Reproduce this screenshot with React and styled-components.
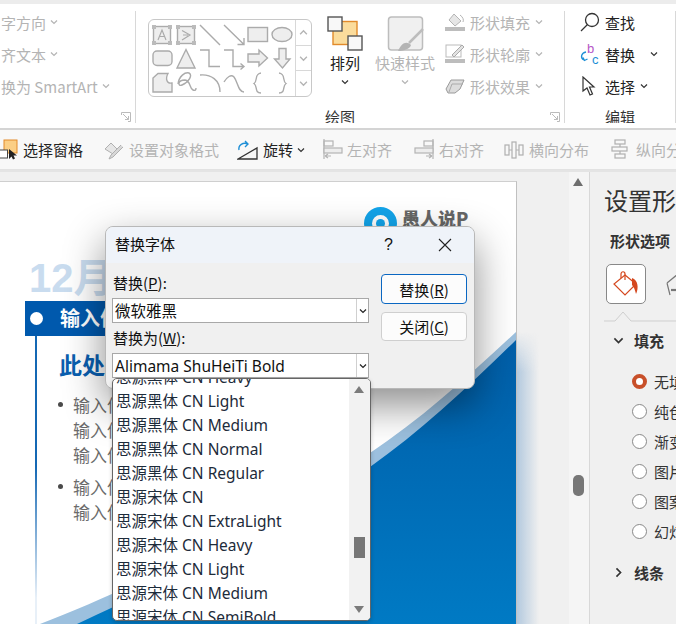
import React from "react";
import styled, { createGlobalStyle } from "styled-components";

const FONT = `"Noto Sans CJK SC", "Noto Sans", sans-serif`;
const Global = createGlobalStyle`
  html, body { margin: 0; padding: 0; background: #f0f0f0; }
  body { width: 676px; height: 624px; overflow: hidden; font-family: ${FONT}; }
`;

const Page = styled.div`
  position: relative; width: 676px; height: 624px; overflow: hidden;
  display: flex; flex-direction: column; background: #f0f0f0;
`;
const TopStrip = styled.div`height: 4px; background: #ececec; flex: none;`;
const Ribbon = styled.div`
  height: 124px; flex: none; background: #fff; display: flex; border-bottom: 2px solid #d4d4d4; box-sizing: content-box; overflow: hidden;
`;
const RibbonGroup = styled.div`
  position: relative; flex: none; width: ${p => p.$w}px; height: 112px; box-sizing: border-box; overflow: hidden;
  border-right: 1px solid #d8d8d8; margin-top: 7px;
`;
const MutedRow = styled.div`
  height: 32px; display: flex; align-items: center; white-space: nowrap; font-size: 15px; color: #b4b4b4; gap: ${p => p.$gap || 4}px;
`;
const RowStack = styled.div`display: flex; flex-direction: column; margin: -5px 0 0 1px;`;
const Launcher = styled.svg`position: absolute; right: 4px; bottom: 1px; width: 10px; height: 10px;`;
const GalleryBox = styled.div`
  position: absolute; left: 12px; top: 8px; width: 164px; height: 78px; border: 1px solid #c8c8c8; border-radius: 6px; display: flex; overflow: hidden; box-sizing: border-box;
`;
const GalleryShapes = styled.svg`width: 146px; height: 76px; flex: none;`;
const GalleryBtns = styled.div`flex: 1; display: flex; flex-direction: column; border-left: 1px solid #d8d8d8;`;
const GalleryBtn = styled.div`flex: 1; border-bottom: 1px solid #d8d8d8; display: flex; align-items: center; justify-content: center; &:last-child { border-bottom: none; }`;
const GroupLabel = styled.div`position: absolute; bottom: -2px; left: ${p => p.$l}px; font-size: 15px; line-height: 16px; height: 16px; color: #333;`;
const BigBtn = styled.div`
  position: absolute; left: ${p => p.$l}px; top: 5px; width: ${p => p.$w}px; display: flex; flex-direction: column; align-items: center; font-size: 15px; color: ${p => p.$muted ? "#b4b4b4" : "#222"};
`;
const BigLabel = styled.div`line-height: 18px; margin: 3px 0 6px; white-space: nowrap;`;
const RowCol = styled.div`position: absolute; left: ${p => p.$l}px; top: -5px; display: flex; flex-direction: column;`;
const DarkRow = styled(MutedRow)`color: #222;`;
const Spacer = styled.span`width: ${p => p.$w}px; flex: none;`;

const Toolbar = styled.div`
  height: 39px; flex: none; background: #f8f8f8; border-bottom: 1px solid #e2e2e2; display: flex; align-items: center; font-size: 15px; white-space: nowrap; overflow: hidden;
`;
const ToolItem = styled.div`
  flex: none; display: flex; align-items: center; gap: ${p => p.$gap || 4}px; color: ${p => p.$muted ? "#b4b4b4" : "#222"}; margin-left: ${p => p.$ml || 0}px;
`;

const Work = styled.div`flex: 1; display: flex; min-height: 0; background: #f0f0f0; border-top: 2px solid #e4e4e4;`;
const Stage = styled.div`position: relative; flex: none; width: 569px; padding-top: 9px; box-sizing: border-box; overflow: hidden;`;
const Slide = styled.div`
  position: relative; width: 517px; height: 100%; background: #fff; box-sizing: border-box; border-top: 1px solid #cfcfcf; border-right: 1px solid #c0c0c0; overflow: hidden;
`;
const SlideGlow = styled.div`
  position: absolute; left: 517px; top: 160px; bottom: 0; width: 22px;
  background: linear-gradient(to right, #b3c9de, rgba(240,240,240,0));
  -webkit-mask-image: linear-gradient(to bottom, transparent, #000 40px);
  mask-image: linear-gradient(to bottom, transparent, #000 40px);
`;
const Wave = styled.svg`position: absolute; left: 0; bottom: 0; width: 516px; height: 300px;`;
const Logo = styled.div`position: absolute; left: 364px; top: 25px; display: flex; align-items: flex-start; gap: 5px;`;
const LogoMark = styled.div`width: 33px; height: 33px; border-radius: 50%; border: 8px solid #12a4ea; background: #fff; box-sizing: border-box; display: flex; align-items: center; justify-content: center; flex: none; &::after { content: ""; width: 9px; height: 9px; border-radius: 50%; background: #12a4ea; }`;
const LogoText = styled.span`font-weight: 900; color: #666; font-size: 18px; line-height: 24px; white-space: nowrap; margin-top: -1px;`;
const SlideBody = styled.div`position: relative; padding-top: 62px; display: flex; flex-direction: column;`;
const Year = styled.div`font-family: "Liberation Sans", "Noto Sans CJK SC", sans-serif; font-weight: 700; font-size: 40px; line-height: 45px; color: #c9dcef; margin-left: 29px; margin-top: 12px;`;
const Banner = styled.div`height: 35px; background: #0059ad; margin: 0 0 0 25px; display: flex; align-items: center; color: #fff; font-weight: 700; font-size: 20px; gap: 17px; padding: 0 0 3px 5px; width: 140px; box-sizing: border-box;`;
const Dot = styled.span`width: 13px; height: 13px; border-radius: 50%; background: #fff; flex: none; margin-top: 3px;`;
const Content = styled.div`margin-left: 35px; border-left: 2px solid; border-image: linear-gradient(#1468b4, #1468b4 45%, #e8f0f8 90%) 1; padding-left: 22px; height: 290px;`;
const Heading = styled.div`font-size: 23px; font-weight: 700; color: #0a5fb0; line-height: 30px; margin-top: 13px; white-space: nowrap;`;
const Bullets = styled.ul`list-style: none; margin: 13px 0 0; padding: 0 0 0 14px;`;
const Bullet = styled.li`position: relative; font-size: 17px; line-height: 25px; color: #6b6b6b; margin-bottom: 7px; white-space: pre-line; &::before { content: ""; position: absolute; left: -15px; top: 10px; width: 5px; height: 5px; border-radius: 50%; background: #4a4a4a; }`;

const VScroll = styled.div`
  position: relative; flex: none; width: 20px; background: #f5f5f5; border-right: 1px solid #d8d8d8;
`;
const Arrow = styled.div`
  position: absolute; left: 4px; top: 6px; width: 0; height: 0; border-left: 5.5px solid transparent; border-right: 5.5px solid transparent; border-bottom: 8px solid #6e6e6e;
`;
const Thumb = styled.div`position: absolute; left: 4px; top: 303px; width: 11px; height: 21px; border-radius: 5px; background: #777;`;
const Panel = styled.div`flex: 1; padding: 10px 0 0 14px; color: #333; overflow: hidden; white-space: nowrap;`;
const PanelTitle = styled.div`font-size: 24px; line-height: 35px; color: #333;`;
const PanelTab = styled.div`font-size: 15px; font-weight: 700; line-height: 20px; margin: 14px 0 0 6px;`;
const IconRow = styled.div`display: flex; gap: 19px; margin: 13px 0 0 2px; align-items: center;`;
const FillIcon = styled.div`width: 40px; height: 40px; border: 1px solid #888; border-radius: 5px; background: #fff; display: flex; align-items: center; justify-content: center; box-sizing: border-box; flex: none;`;
const Notch = styled.svg`display: block; width: 86px; height: 12px; margin-top: 6px;`;
const Section = styled.div`display: flex; align-items: center; gap: 10px; font-size: 15px; font-weight: 700; margin-left: 9px; height: 30px; margin-top: ${p => p.$mt || 0}px;`;
const RadioList = styled.div`display: flex; flex-direction: column; margin: 11px 0 0 28px;`;
const RadioRow = styled.div`height: 30px; display: flex; align-items: center; gap: 7px; font-size: 15px;`;
const Radio = styled.span`width: 15px; height: 15px; border-radius: 50%; box-sizing: border-box; background: #fff; flex: none; border: ${p => p.$on ? "4px solid #c8502a" : "1px solid #888"};`;

const Dialog = styled.div`
  position: absolute; left: 105px; top: 226px; width: 370px; height: 163px; border-radius: 8px; background: #f0f0f0; border: 1px solid #b8b8b8; box-sizing: border-box; box-shadow: 0 16px 40px rgba(0,0,0,.45); overflow: hidden; display: flex; flex-direction: column; font-size: 15px; color: #111;
`;
const DlgHead = styled.div`height: 36px; flex: none; background: #eff3f9; display: flex; align-items: center; padding-left: 9px;`;
const DlgTitle = styled.div`flex: 1; font-size: 15px; padding-bottom: 4px;`;
const HelpBtn = styled.div`width: 15px; font-family: "Liberation Sans", sans-serif; font-size: 16px; margin-right: 39px;`;
const CloseBtn = styled.svg`width: 14px; height: 14px; margin-right: 22px;`;
const DlgBody = styled.div`flex: 1; display: flex; padding: 10px 8px 0 6px;`;
const DlgFields = styled.div`width: 257px; flex: none; display: flex; flex-direction: column;`;
const FieldLabel = styled.div`height: 20px; line-height: 20px; margin-left: 1px; font-size: 15px;`;
const Under = styled.span`text-decoration: underline;`;
const Combo = styled.div`
  height: 25px; background: #fff; border: 1px solid #a8a8a8; box-sizing: border-box; display: flex; align-items: center; margin: 5px 0; font-size: 15.5px;
`;
const ComboText = styled.div`flex: 1; padding-left: 2px; font-family: "Noto Sans", "Noto Sans CJK SC", sans-serif;`;
const ComboArrow = styled.div`width: 11px; height: 100%; border-left: 1px solid #d0d0d0; display: flex; align-items: center; justify-content: center; flex: none;`;
const DlgBtns = styled.div`flex: 1; margin-left: 12px; display: flex; flex-direction: column; gap: 8px; margin-top: 1px;`;
const DlgBtn = styled.div`
  height: ${p => p.$primary ? 30 : 29}px; box-sizing: border-box; background: #fcfcfc; border-radius: 4px; display: flex; align-items: center; justify-content: center;
  border: 1px solid ${p => p.$primary ? "#0a67c2" : "#cfcfcf"}; font-size: 15px; width: 86px;
`;
const Dropdown = styled.div`
  position: absolute; left: 112px; top: 378px; width: 259px; height: 243px; background: #fff; border: 1px solid #666; border-radius: 5px; box-sizing: border-box; overflow: hidden; box-shadow: 0 2px 4px rgba(0,0,0,.2);
  display: flex;
`;
const DropList = styled.div`flex: 1; margin-top: -14px; overflow: hidden; padding-left: 3px; font-size: 15.5px; font-family: "Noto Sans", "Noto Sans CJK SC", sans-serif; color: #1d2b3a;`;
const DropItem = styled.div`height: 24px; line-height: 24px; white-space: nowrap;`;
const DropScroll = styled.div`position: relative; width: 21px; flex: none; background: #f2f2f2;`;
const DropArrowUp = styled.div`position: absolute; left: 5px; top: 7px; width: 0; height: 0; border-left: 5.5px solid transparent; border-right: 5.5px solid transparent; border-bottom: 7px solid #7b7b7b;`;
const DropArrowDown = styled.div`position: absolute; left: 5px; bottom: 7px; width: 0; height: 0; border-left: 5.5px solid transparent; border-right: 5.5px solid transparent; border-top: 7px solid #7b7b7b;`;
const DropThumb = styled.div`position: absolute; left: 5px; top: 158px; width: 11px; height: 21px; background: #777;`;

const Chev = ({ c = "#b4b4b4", s = 8, dir = "down" }) => (
  <svg width={s} height={s} viewBox="0 0 8 8" style={{ flex: "none", transform: dir === "right" ? "rotate(-90deg)" : dir === "up" ? "rotate(180deg)" : "none" }}>
    <path d="M1 2.5 L4 5.5 L7 2.5" fill="none" stroke={c} strokeWidth="1.2" />
  </svg>
);

const LauncherIcon = () => (
  <Launcher viewBox="0 0 10 10"><path d="M.5 3V.5H9.5V9.5H7M2 2L7.5 7.5M7.5 4V7.5H4" fill="none" stroke="#bbb" /></Launcher>
);

const GS = "#ababab";
const Gallery = () => (
  <GalleryShapes viewBox="0 0 146 76" fill="none" stroke={GS} strokeWidth="1.4">
    <g fill="#eee">
      <rect x="4.5" y="6.5" width="17" height="17" />
      <rect x="28.5" y="6.5" width="17" height="17" />
      <rect x="99" y="7.5" width="19.5" height="14" />
      <ellipse cx="133" cy="14.5" rx="10" ry="7" />
      <rect x="4" y="31" width="19" height="14.5" rx="4" />
      <path d="M28 48 L37 29.5 L46 48 Z" />
      <path d="M99 34 H110 V30 L118.5 38 L110 46 V42 H99 Z" />
      <path d="M130 28.5 H137 V39 H141 L133.5 48 L125.5 39 H130 Z" />
      <path d="M9 53.5 H19 C16 59 18 64 23 63 V72 H4 V58 Z" />
    </g>
    <g fill="#bbb" stroke="none">
      <rect x="3" y="5" width="4" height="4" /><rect x="19" y="5" width="4" height="4" /><rect x="3" y="21" width="4" height="4" /><rect x="19" y="21" width="4" height="4" />
      <rect x="27" y="5" width="4" height="4" /><rect x="43" y="5" width="4" height="4" /><rect x="27" y="21" width="4" height="4" /><rect x="43" y="21" width="4" height="4" />
    </g>
    <path d="M9 20 L13 10 L17 20 M10.5 16.5 H15.5" strokeWidth="1.2" />
    <path d="M33 10.5 L41 15 L33 20 M34 15 H39" strokeWidth="1.2" />
    <path d="M51 5 L71 25" />
    <path d="M75 5 L95 24.5 M95 18 V24.5 H88.5" />
    <path d="M51 30 H60 V46.5 H71" />
    <path d="M75 30 H84 V46.5 H94.5 M91.5 43.5 L95 46.5 L91.5 49.5" />
    <path d="M29 64 C30 56 36 52 40 53 C44 55 40 62 33 65 C29 67 28 60 36 60 C42 61 40 68 44 70 C46 71 47 70 47 68" />
    <path d="M51 55 C62 54 71 60 71 72" />
    <path d="M75 62 C78 57 82 54 85 57 C89 62 89 72 95 72" />
    <path d="M112 53 C105 54 109 61 105 63.5 C109 66 105 73 112 73" />
    <path d="M130 53 C137 54 133 61 137 63.5 C133 66 137 73 130 73" />
  </GalleryShapes>
);

const Arrange = () => (
  <svg width="37" height="35" viewBox="0 0 37 35">
    <rect x="6" y="5.5" width="24" height="23" fill="#fbdc9c" stroke="#e28a2b" strokeWidth="1.4" />
    <rect x="1" y="1" width="14" height="14" fill="#f8f8f8" stroke="#555" strokeWidth="1.4" />
    <rect x="21" y="20" width="14" height="14" fill="#f8f8f8" stroke="#555" strokeWidth="1.4" />
  </svg>
);
const QuickStyle = () => (
  <svg width="37" height="35" viewBox="0 0 37 35">
    <rect x="1.5" y="1" width="34" height="33" rx="3" fill="#f0f0f0" stroke="#bdbdbd" strokeWidth="1.5" />
    <path d="M36 13 L22 27" stroke="#bdbdbd" strokeWidth="2.5" />
    <path d="M11 35 C14 28 19 24 24 29 C23 33 16 35 11 35 Z" fill="#b4b4b4" />
  </svg>
);
const FillSmall = () => (
  <svg width="20" height="19" viewBox="0 0 20 19" style={{ flex: "none" }}>
    <path d="M9 1 L16 8 L10 13 L4 7 Z" fill="#e6e6e6" stroke="#b4b4b4" />
    <path d="M15 2 C18 4 19 7 18 9" stroke="#b4b4b4" fill="none" />
    <rect x="0" y="14" width="20" height="4" fill="#bdbdbd" />
  </svg>
);
const OutlineSmall = () => (
  <svg width="20" height="20" viewBox="0 0 20 20" style={{ flex: "none" }}>
    <rect x="1" y="1" width="15" height="12" fill="none" stroke="#bbb" />
    <path d="M7 11 L17 1 L19 3 L9 13 Z" fill="#e2e2e2" stroke="#aaa" />
    <rect x="0" y="15" width="20" height="4" fill="#bdbdbd" />
  </svg>
);
const EffectSmall = () => (
  <svg width="20" height="16" viewBox="0 0 20 16" style={{ flex: "none" }}>
    <path d="M1 11 L6 2 H19 L15 11 L10 15 H3 Z" fill="#dcdcdc" stroke="#9a9a9a" />
    <path d="M4 14 L7 6 H18" fill="none" stroke="#aaa" />
  </svg>
);
const Search = () => (
  <svg width="20" height="20" viewBox="0 0 20 20" fill="none" stroke="#333" strokeWidth="1.3" style={{ flex: "none" }}>
    <circle cx="12" cy="8" r="6.5" /><path d="M7.5 12.5 L1 19" />
  </svg>
);
const ReplaceIcon = () => (
  <svg width="20" height="22" viewBox="0 0 20 22" style={{ flex: "none" }}>
    <text x="7" y="10" fontSize="13" fill="#b556c6" fontFamily="Liberation Sans">b</text>
    <text x="12" y="21" fontSize="13" fill="#1e8fd6" fontFamily="Liberation Sans">c</text>
    <path d="M6 9 C1 10 0 15 4 17 M3 14.5 L4.5 17.5 L7.5 16" fill="none" stroke="#1e8fd6" strokeWidth="1.3" />
  </svg>
);
const Cursor = ({ s = 20 }) => (
  <svg width={s} height={s} viewBox="0 0 20 20" style={{ flex: "none" }}>
    <path d="M3 1 V15 L7 12 L10 19 L12.5 18 L9.5 11 H14 Z" fill="#fff" stroke="#333" strokeWidth="1.2" />
  </svg>
);
const PaneIcon = () => (
  <svg width="20" height="21" viewBox="0 0 20 21" style={{ flex: "none", marginLeft: -1 }}>
    <rect x="5" y="1" width="13" height="13" fill="#fbcf86" stroke="#e28a2b" />
    <rect x="0.5" y="11" width="8" height="8" fill="#fff" stroke="#444" />
    <path d="M10 10 V20 L12.5 17.5 L14 20.5 L16 19.5 L14.5 16.5 H18 Z" fill="#222" />
  </svg>
);
const FormatIcon = () => (
  <svg width="20" height="20" viewBox="0 0 20 20" style={{ flex: "none" }}>
    <path d="M1 9 L7 3 L13 9 L9 14 Z" fill="#e6e6e6" stroke="#b0b0b0" />
    <path d="M19 7 L9 17 L5 19 L7 15 L17 5" fill="#d8d8d8" stroke="#b0b0b0" />
  </svg>
);
const RotateIcon = () => (
  <svg width="22" height="20" viewBox="0 0 22 20" style={{ flex: "none" }}>
    <path d="M2 10 C1 5 6 2 11 4 M8 1 L11 4 L8 7" fill="none" stroke="#1e8fd6" strokeWidth="1.4" />
    <path d="M1 19 L20 8 V19 Z" fill="#f6f6f6" stroke="#333" strokeWidth="1.3" />
  </svg>
);
const AlignV = ({ flip }) => (
  <svg width="21" height="21" viewBox="0 0 21 21" style={{ flex: "none", transform: flip ? "scaleX(-1)" : "none" }} fill="none" stroke="#b4b4b4" strokeWidth="1.2">
    <path d="M1 0 V20" />
    <rect x="1" y="2" width="9" height="5" />
    <rect x="1" y="9" width="18" height="5" fill="#ededed" />
    <path d="M2 17 H8 M2 17 L5 15 M2 17 L5 19" />
  </svg>
);
const DistH = () => (
  <svg width="20" height="18" viewBox="0 0 20 18" style={{ flex: "none" }} fill="none" stroke="#b0b0b0" strokeWidth="1.2">
    <rect x="1" y="4" width="4" height="10" />
    <rect x="8" y="1" width="4" height="16" />
    <rect x="15" y="4" width="4" height="10" />
    <path d="M5 9 H8 M12 9 H15" />
  </svg>
);
const DistV = () => (
  <svg width="17" height="21" viewBox="0 0 17 21" style={{ flex: "none" }} fill="none" stroke="#b0b0b0" strokeWidth="1.2">
    <rect x="4" y="1" width="10" height="4" />
    <rect x="1" y="8" width="15" height="4" />
    <rect x="4" y="15" width="10" height="4" />
    <path d="M9 5 V8 M9 12 V15" />
  </svg>
);

const FONTS = [
  "思源黑体 CN Heavy", "思源黑体 CN Light", "思源黑体 CN Medium", "思源黑体 CN Normal", "思源黑体 CN Regular",
  "思源宋体 CN", "思源宋体 CN ExtraLight", "思源宋体 CN Heavy", "思源宋体 CN Light", "思源宋体 CN Medium", "思源宋体 CN SemiBold",
];
const OPTIONS = ["无填", "纯色", "渐变", "图片", "图案", "幻灯"];

export default function App() {
  return (
    <Page>
      <Global />
      <TopStrip />
      <Ribbon>
        <RibbonGroup $w={136}>
          <RowStack>
            <MutedRow>字方向<Chev /></MutedRow>
            <MutedRow>齐文本<Chev /></MutedRow>
            <MutedRow>换为 SmartArt<Chev /></MutedRow>
          </RowStack>
          <LauncherIcon />
        </RibbonGroup>
        <RibbonGroup $w={429}>
          <GalleryBox>
            <Gallery />
            <GalleryBtns>
              <GalleryBtn><Chev dir="up" s={9} /></GalleryBtn>
              <GalleryBtn><Chev s={9} /></GalleryBtn>
              <GalleryBtn><Chev s={9} /></GalleryBtn>
            </GalleryBtns>
          </GalleryBox>
          <BigBtn $l={186} $w={46}>
            <Arrange />
            <BigLabel>排列</BigLabel>
            <Chev c="#333" />
          </BigBtn>
          <BigBtn $l={237} $w={64} $muted>
            <QuickStyle />
            <BigLabel>快速样式</BigLabel>
            <Chev />
          </BigBtn>
          <RowCol $l={309}>
            <MutedRow $gap={5}><FillSmall />形状填充<Chev /></MutedRow>
            <MutedRow $gap={5}><OutlineSmall />形状轮廓<Chev /></MutedRow>
            <MutedRow $gap={5}><EffectSmall />形状效果<Chev /></MutedRow>
          </RowCol>
          <GroupLabel $l={189}>绘图</GroupLabel>
          <LauncherIcon />
        </RibbonGroup>
        <RibbonGroup $w={111}>
          <RowCol $l={15}>
            <DarkRow $gap={5}><Search />查找</DarkRow>
            <DarkRow $gap={5}><ReplaceIcon />替换<Spacer $w={5} /><Chev c="#333" /></DarkRow>
            <DarkRow $gap={5}><Cursor />选择<Chev c="#333" /></DarkRow>
          </RowCol>
          <GroupLabel $l={40}>编辑</GroupLabel>
        </RibbonGroup>
      </Ribbon>
      <Toolbar>
        <ToolItem><PaneIcon />选择窗格</ToolItem>
        <ToolItem $muted $ml={21} $gap={5}><FormatIcon />设置对象格式</ToolItem>
        <ToolItem $ml={18}><RotateIcon />旋转<Chev c="#333" /></ToolItem>
        <ToolItem $muted $ml={18} $gap={3}><AlignV />左对齐</ToolItem>
        <ToolItem $muted $ml={21} $gap={5}><AlignV flip />右对齐</ToolItem>
        <ToolItem $muted $ml={20} $gap={5}><DistH />横向分布</ToolItem>
        <ToolItem $muted $ml={22} $gap={8}><DistV />纵向分布</ToolItem>
      </Toolbar>
      <Work>
        <Stage>
          <Slide>
            <Wave viewBox="0 324 516 300" preserveAspectRatio="none">
              <defs>
                <linearGradient id="waveBlue" x1="0" y1="0" x2="0" y2="1">
                  <stop offset="0" stopColor="#005ea8" />
                  <stop offset="1" stopColor="#007ac4" />
                </linearGradient>
              </defs>
              <path d="M40 624 C130 590 260 525 370 453 C420 420 470 375 516 332 L516 624 Z" fill="#9cc0de" />
              <path d="M77 624 C160 585 280 530 370 467 C420 432 470 385 516 340 L516 624 Z" fill="url(#waveBlue)" />
            </Wave>
            <Logo><LogoMark /><LogoText>愚人说P</LogoText></Logo>
            <SlideBody>
              <Year>12月</Year>
              <Banner><Dot />输入信息</Banner>
              <Content>
                <Heading>此处输入</Heading>
                <Bullets>
                  <Bullet>{"输入信息\n输入信息\n输入信息"}</Bullet>
                  <Bullet>{"输入信息\n输入信息"}</Bullet>
                </Bullets>
              </Content>
            </SlideBody>
          </Slide>
          <SlideGlow />
        </Stage>
        <VScroll><Arrow /><Thumb /></VScroll>
        <Panel>
          <PanelTitle>设置形状格式</PanelTitle>
          <PanelTab>形状选项</PanelTab>
          <IconRow>
            <FillIcon>
              <svg width="28" height="28" viewBox="0 0 28 28" fill="none" stroke="#d5481f" strokeWidth="1.2">
                <path d="M13 5 L24 14 L13 25 L2 14 Z" fill="#fff" />
                <path d="M9 8 V4 C9 1 13 1 13 4 V10" />
                <path d="M20 8 C26 10 27 18 24 24 C23 20 22 17 20 15 Z" fill="#d5481f" stroke="none" />
              </svg>
            </FillIcon>
            <svg width="26" height="26" viewBox="0 0 26 26" fill="none" stroke="#777" strokeWidth="1.2" style={{ flex: "none" }}>
              <path d="M2 12 L13 3 H26 M2 12 L5 24" /><path d="M6 19 H26" strokeWidth="2.2" />
            </svg>
          </IconRow>
          <Notch viewBox="0 0 86 12"><path d="M0 11 H11 L19 2 L27 11 H86" fill="none" stroke="#cfcfcf" /></Notch>
          <Section $mt={3}><Chev c="#333" s={11} />填充</Section>
          <RadioList>
            {OPTIONS.map((o, i) => <RadioRow key={o}><Radio $on={i === 0} />{o}</RadioRow>)}
          </RadioList>
          <Section $mt={11}><Chev c="#333" s={11} dir="right" />线条</Section>
        </Panel>
      </Work>
      <Dialog>
        <DlgHead>
          <DlgTitle>替换字体</DlgTitle>
          <HelpBtn>?</HelpBtn>
          <CloseBtn viewBox="0 0 14 14"><path d="M1 1 L13 13 M13 1 L1 13" stroke="#222" strokeWidth="1.1" /></CloseBtn>
        </DlgHead>
        <DlgBody>
          <DlgFields>
            <FieldLabel>替换(<Under>P</Under>):</FieldLabel>
            <Combo><ComboText>微软雅黑</ComboText><ComboArrow><Chev c="#222" /></ComboArrow></Combo>
            <FieldLabel>替换为(<Under>W</Under>):</FieldLabel>
            <Combo><ComboText>Alimama ShuHeiTi Bold</ComboText><ComboArrow><Chev c="#222" /></ComboArrow></Combo>
          </DlgFields>
          <DlgBtns>
            <DlgBtn $primary>替换(<Under>R</Under>)</DlgBtn>
            <DlgBtn>关闭(<Under>C</Under>)</DlgBtn>
          </DlgBtns>
        </DlgBody>
      </Dialog>
      <Dropdown>
        <DropList>{FONTS.map(f => <DropItem key={f}>{f}</DropItem>)}</DropList>
        <DropScroll><DropArrowUp /><DropThumb /><DropArrowDown /></DropScroll>
      </Dropdown>
    </Page>
  );
}
